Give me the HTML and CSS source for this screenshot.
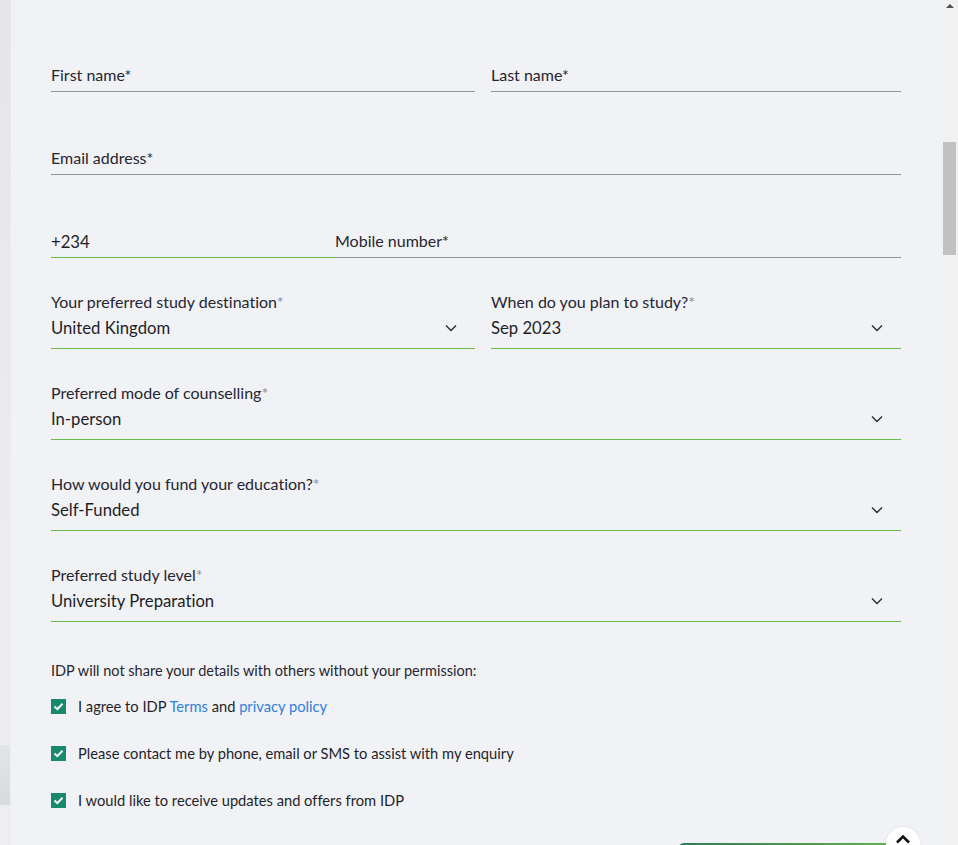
FILE: index.html
```html
<!DOCTYPE html>
<html lang="en">
<head>
<meta charset="utf-8">
<title>Enquiry form</title>
<link rel="stylesheet" href="styles.css">
</head>
<body>
<div class="page">
  <div class="side-strip"><div class="side-shape"></div></div>
  <main class="panel">
    <form class="form">
      <div class="row two-col">
        <div class="tfield"><span class="flabel">First name*</span></div>
        <div class="tfield"><span class="flabel">Last name*</span></div>
      </div>
      <div class="row">
        <div class="tfield"><span class="flabel">Email address*</span></div>
      </div>
      <div class="row phone">
        <div class="tfield code"><span class="fvalue">+234</span></div>
        <div class="tfield mobile"><span class="flabel">Mobile number*</span></div>
      </div>
      <div class="row two-col">
        <div class="sfield">
          <div class="slabel">Your preferred study destination<span class="star">*</span></div>
          <div class="sbox"><span class="svalue">United Kingdom</span><svg class="chev" viewBox="0 0 12 8" width="12" height="8"><path d="M1 1.5 L6 6.5 L11 1.5" fill="none" stroke="#2b2b33" stroke-width="1.4"/></svg></div>
        </div>
        <div class="sfield">
          <div class="slabel">When do you plan to study?<span class="star">*</span></div>
          <div class="sbox"><span class="svalue">Sep 2023</span><svg class="chev" viewBox="0 0 12 8" width="12" height="8"><path d="M1 1.5 L6 6.5 L11 1.5" fill="none" stroke="#2b2b33" stroke-width="1.4"/></svg></div>
        </div>
      </div>
      <div class="row">
        <div class="sfield">
          <div class="slabel">Preferred mode of counselling<span class="star">*</span></div>
          <div class="sbox"><span class="svalue">In-person</span><svg class="chev" viewBox="0 0 12 8" width="12" height="8"><path d="M1 1.5 L6 6.5 L11 1.5" fill="none" stroke="#2b2b33" stroke-width="1.4"/></svg></div>
        </div>
      </div>
      <div class="row">
        <div class="sfield">
          <div class="slabel">How would you fund your education?<span class="star">*</span></div>
          <div class="sbox"><span class="svalue">Self-Funded</span><svg class="chev" viewBox="0 0 12 8" width="12" height="8"><path d="M1 1.5 L6 6.5 L11 1.5" fill="none" stroke="#2b2b33" stroke-width="1.4"/></svg></div>
        </div>
      </div>
      <div class="row">
        <div class="sfield">
          <div class="slabel">Preferred study level<span class="star">*</span></div>
          <div class="sbox"><span class="svalue">University Preparation</span><svg class="chev" viewBox="0 0 12 8" width="12" height="8"><path d="M1 1.5 L6 6.5 L11 1.5" fill="none" stroke="#2b2b33" stroke-width="1.4"/></svg></div>
        </div>
      </div>
      <div class="consent">
        <p class="note">IDP will not share your details with others without your permission:</p>
        <label class="check"><span class="box"><svg viewBox="0 0 15 15" width="15" height="15"><path d="M3.5 7.6 L6.3 10.2 L11.5 4.8" fill="none" stroke="#fff" stroke-width="2"/></svg></span><span>I agree to IDP <a class="link">Terms</a> and <a class="link">privacy policy</a></span></label>
        <label class="check"><span class="box"><svg viewBox="0 0 15 15" width="15" height="15"><path d="M3.5 7.6 L6.3 10.2 L11.5 4.8" fill="none" stroke="#fff" stroke-width="2"/></svg></span><span>Please contact me by phone, email or SMS to assist with my enquiry</span></label>
        <label class="check"><span class="box"><svg viewBox="0 0 15 15" width="15" height="15"><path d="M3.5 7.6 L6.3 10.2 L11.5 4.8" fill="none" stroke="#fff" stroke-width="2"/></svg></span><span>I would like to receive updates and offers from IDP</span></label>
      </div>
      <div class="actions">
        <button type="button" class="submit" aria-label="Submit"></button>
      </div>
    </form>
    <button type="button" class="to-top" aria-label="Back to top"><svg viewBox="0 0 16 10" width="16" height="10"><path d="M2 8.5 L8 2.5 L14 8.5" fill="none" stroke="#111" stroke-width="2.6"/></svg></button>
  </main>
  <div class="scrollbar">
    <div class="sb-arrow"></div>
    <div class="sb-thumb"></div>
  </div>
</div>
</body>
</html>
```

FILE: styles.css
```css
* { box-sizing: border-box; }
html, body { margin: 0; padding: 0; }
body {
  font-family: Lato, "Open Sans", "Liberation Sans", sans-serif;
  font-variant-ligatures: none;
  color: #23232e;
  background: #f1f2f6;
}
.page {
  display: flex;
  height: 845px;
  overflow: hidden;
}
.side-strip {
  width: 11px;
  flex: none;
  background: linear-gradient(#e6e5e7, #ecebed 60%, #eeeef0);
  position: relative;
}
.side-shape {
  position: absolute;
  left: 0;
  top: 745px;
  width: 10px;
  height: 60px;
  background: linear-gradient(#dde1e5, #cdd3d9);
  opacity: 0.7;
}
.panel {
  flex: 1;
  background: #f1f2f6;
  padding: 43px 40px 0 40px;
  position: relative;
}
.form {
  display: flex;
  flex-direction: column;
  gap: 34px;
}
.row { display: flex; }
.row > .tfield, .row > .sfield { flex: 1; }
.row.two-col { gap: 16px; }
.row.two-col > :first-child { flex: none; width: 424px; }
.tfield {
  height: 49px;
  border-bottom: 1px solid #92929c;
  display: flex;
  align-items: flex-end;
  padding-bottom: 6px;
}
.flabel {
  font-size: 16px;
  line-height: 20px;
  color: #262630;
}
.fvalue {
  font-size: 16.7px;
  line-height: 20px;
  color: #1e1e26;
  position: relative;
  top: 1px;
}
.row.phone > .code {
  flex: none;
  width: 284px;
  border-bottom-color: #6cba47;
}
.row.phone > .mobile { flex: 1; }
.sfield {
  border-bottom: 1px solid #6cba47;
}
.slabel {
  font-size: 16px;
  line-height: 20px;
  color: #262630;
}
.star { color: #8d8d95; }
.sbox {
  height: 36px;
  display: flex;
  align-items: center;
  justify-content: space-between;
  padding: 0 18px 4px 0;
}
.svalue {
  font-size: 16.7px;
  line-height: 22px;
  color: #1e1e26;
}
.chev { display: block; }
.consent {
  margin-top: 5px;
  display: flex;
  flex-direction: column;
}
.note {
  margin: 0 0 15px 0;
  font-size: 14.5px;
  line-height: 20px;
  color: #262630;
}
.check {
  display: flex;
  align-items: center;
  gap: 12px;
  font-size: 14.7px;
  line-height: 20px;
  height: 20px;
  margin-bottom: 27px;
  color: #1f1f2a;
}
.box {
  width: 15px;
  height: 15px;
  background: #178a6b;
  display: block;
  flex: none;
}
.box svg { display: block; }
.link { color: #2f7fdc; text-decoration: none; }
.actions {
  display: flex;
  justify-content: flex-end;
  margin-top: -28px;
}
.submit {
  width: 223px;
  height: 44px;
  border: none;
  border-radius: 6px;
  background: linear-gradient(90deg, #2f7c58, #68b14a);
}
.to-top {
  position: absolute;
  left: 875px;
  top: 827px;
  width: 34px;
  height: 34px;
  border-radius: 50%;
  border: none;
  background: #fff;
  box-shadow: 0 0 3px rgba(0,0,0,0.08);
  display: flex;
  justify-content: center;
  padding: 7px 0 0 0;
}
.to-top svg { display: block; }
.scrollbar {
  width: 17px;
  flex: none;
  background: #f1f1f1;
  position: relative;
}
.sb-arrow {
  margin: 4px auto 0;
  width: 0;
  height: 0;
  border-left: 4px solid transparent;
  border-right: 4px solid transparent;
  border-bottom: 4px solid #505050;
}
.sb-thumb {
  position: absolute;
  left: 2px;
  top: 142px;
  width: 13px;
  height: 113px;
  background: #c1c1c1;
}
```
